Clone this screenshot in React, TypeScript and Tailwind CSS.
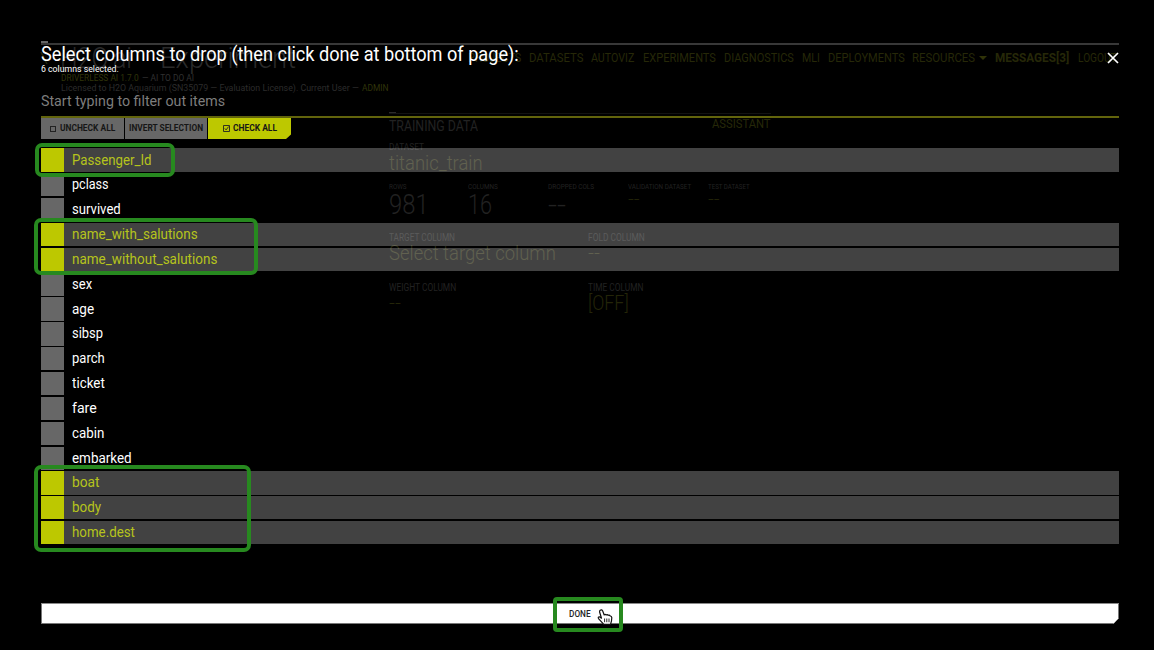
import { useLayoutEffect, useRef, useState } from "react";

/** Single line of text condensed or widened to the width `w`. */
function Fit({ w, className = "", children }: { w: number; className?: string; children: string }) {
  const ref = useRef<HTMLSpanElement>(null);
  const [scale, setScale] = useState(1);
  useLayoutEffect(() => {
    if (ref.current) setScale(w / ref.current.offsetWidth);
  }, [w, children]);
  return (
    <span className={`block shrink-0 whitespace-nowrap ${className}`} style={{ width: w }}>
      <span ref={ref} className="inline-block origin-left" style={{ transform: `scaleX(${scale})` }}>
        {children}
      </span>
    </span>
  );
}

const nav = [
  { label: "PROJECTS", w: 53 },
  { label: "DATASETS", w: 54 },
  { label: "AUTOVIZ", w: 43.5 },
  { label: "EXPERIMENTS", w: 73 },
  { label: "DIAGNOSTICS", w: 70 },
  { label: "MLI", w: 18 },
  { label: "DEPLOYMENTS", w: 76.5 },
];

const columns = [
  { name: "Passenger_Id", w: 79.5, on: true },
  { name: "pclass", w: 37, on: false },
  { name: "survived", w: 49, on: false },
  { name: "name_with_salutions", w: 125.5, on: true },
  { name: "name_without_salutions", w: 145.5, on: true },
  { name: "sex", w: 20, on: false },
  { name: "age", w: 22.5, on: false },
  { name: "sibsp", w: 31, on: false },
  { name: "parch", w: 33, on: false },
  { name: "ticket", w: 33, on: false },
  { name: "fare", w: 24.5, on: false },
  { name: "cabin", w: 32, on: false },
  { name: "embarked", w: 60, on: false },
  { name: "boat", w: 27.5, on: true },
  { name: "body", w: 29.5, on: true },
  { name: "home.dest", w: 63, on: true },
];

const stats = [
  { label: "ROWS", lw: 18, value: "981", vw: 40, box: "w-[79px]", big: true },
  { label: "COLUMNS", lw: 30, value: "16", vw: 24, box: "w-20", big: true },
  { label: "DROPPED COLS", lw: 46, value: "--", vw: 18, box: "w-[80px]", big: true },
  { label: "VALIDATION DATASET", lw: 63, value: "--", vw: 12, box: "w-[80px]", big: false },
  { label: "TEST DATASET", lw: 42, value: "--", vw: 12, box: "w-[80px]", big: false },
];

function ExperimentPage() {
  return (
    <div className="h-[650px] w-full pl-10 pt-[41px] text-[#222]">
      <div className="flex h-[71px] w-[1079px]">
        <div className="w-[428px] shrink-0">
          <div className="flex h-[32px] items-center gap-3 pt-[2px]">
            <svg className="h-4 w-2" viewBox="0 0 8 16" fill="none" stroke="#252508" strokeWidth="1.5">
              <path d="M1 2l6 12" />
            </svg>
            <Fit w={72} className="text-[29px] font-light leading-[30px] text-[#2a2a2a]">H2O.ai</Fit>
            <Fit w={136} className="ml-[16px] text-[29px] font-light leading-[30px] text-[#2a2a2a]">Experiment</Fit>
          </div>
          <div className="ml-[21px] flex h-[10px] gap-[3px] text-[9px] leading-[10px]">
            <Fit w={78} className="text-[#31350a]">DRIVERLESS AI 1.7.0</Fit>
            <Fit w={52} className="text-[#303030]">— AI TO DO AI</Fit>
          </div>
          <div className="ml-[21px] flex h-[10px] gap-[3px] text-[9px] leading-[10px]">
            <Fit w={298} className="text-[#2c2c2c]">
              Licensed to H2O Aquarium (SN35079 — Evaluation License). Current User —
            </Fit>
            <Fit w={27} className="text-[#31350a]">ADMIN</Fit>
          </div>
        </div>
        <nav className="flex h-5 items-center gap-2 pt-[13px] text-[13px] leading-5 text-[#262808]">
          {nav.map((n) => (
            <Fit key={n.label} w={n.w}>{n.label}</Fit>
          ))}
          <Fit w={63}>RESOURCES</Fit>
          <svg className="-ml-1 h-1 w-2 shrink-0" viewBox="0 0 8 4" fill="#303308">
            <path d="M0 0h8L4 4z" />
          </svg>
          <Fit w={74} className="font-bold">MESSAGES[3]</Fit>
          <Fit w={39} className="ml-px">LOGOUT</Fit>
        </nav>
      </div>
      <div className="flex">
        <div className="ml-[349px] w-[323px] shrink-0">
          <div className="h-px w-[7px] bg-[#2b2b2b]" />
          <div className="mb-[4px] h-px w-[382px] bg-[#121212]" />
          <Fit w={89} className="h-[24px] text-[14px] leading-[16px]">TRAINING DATA</Fit>
          <Fit w={35} className="h-[11px] text-[9px] leading-[11px]">DATASET</Fit>
          <Fit w={94} className="h-[28px] text-[20px] font-light leading-[20px] text-[#292a12]">titanic_train</Fit>
          <div className="flex h-[50px]">
            {stats.map((s) => (
              <div key={s.label} className={`shrink-0 ${s.box}`}>
                <Fit w={s.lw} className="text-[7px] leading-[12px]">{s.label}</Fit>
                {s.big ? (
                  <Fit w={s.vw} className="text-[28px] font-light leading-[23px]">{s.value}</Fit>
                ) : (
                  <Fit w={s.vw} className="text-[17px] font-light leading-[12px] text-[#252608]">{s.value}</Fit>
                )}
              </div>
            ))}
          </div>
          <div className="flex h-[50px]">
            <div className="w-[199px] shrink-0">
              <Fit w={66} className="text-[10px] leading-[13px]">TARGET COLUMN</Fit>
              <Fit w={167} className="text-[20px] font-light leading-[18px] text-[#292a12]">Select target column</Fit>
            </div>
            <div>
              <Fit w={57} className="text-[10px] leading-[13px]">FOLD COLUMN</Fit>
              <Fit w={12} className="text-[19px] font-light leading-[17px] text-[#292a12]">--</Fit>
            </div>
          </div>
          <div className="flex h-[50px]">
            <div className="w-[199px] shrink-0">
              <Fit w={67} className="text-[10px] leading-[13px]">WEIGHT COLUMN</Fit>
              <Fit w={12} className="text-[19px] font-light leading-[17px] text-[#242508]">--</Fit>
            </div>
            <div>
              <Fit w={55} className="text-[10px] leading-[13px]">TIME COLUMN</Fit>
              <Fit w={41} className="text-[20px] font-light leading-[18px] text-[#242508]">[OFF]</Fit>
            </div>
          </div>
        </div>
        <Fit w={59} className="pt-[5px] text-[12px] leading-[15px] text-[#262808]">ASSISTANT</Fit>
      </div>
    </div>
  );
}

function DropDialog() {
  return (
    <div className="absolute inset-0 pl-[41px] pr-[35px] pt-[41px]">
      <div className="h-[2px] w-[7px] bg-[#666]" />
      <div className="h-[2px] w-full bg-[#383838]" />
      <div className="flex h-[18px] justify-between text-white">
        <Fit w={478} className="text-[20px] leading-[18px]">Select columns to drop (then click done at bottom of page):</Fit>
        <svg className="mt-[7px] h-3 w-3" viewBox="0 0 12 12" stroke="white" strokeWidth="1.7">
          <path d="M1 1l10 10M11 1 1 11" />
        </svg>
      </div>
      <Fit w={78} className="h-[28px] text-[9.5px] leading-[11px] text-white">6 columns selected.</Fit>
      <Fit w={184} className="h-[25px] text-[15px] leading-[20px] text-[#7d7d7d]">Start typing to filter out items</Fit>
      <div className="h-[2px] w-full bg-[#62640c]" />
      <div className="flex h-[21px] gap-px text-[9px] font-bold leading-[21px] text-[#161616]">
        <div className="flex w-[83px] items-center gap-1 bg-[#676767] pl-[9px]">
          <span className="h-[6px] w-[6px] border border-[#222]" />
          <Fit w={55}>UNCHECK ALL</Fit>
        </div>
        <div className="flex w-[82px] items-center bg-[#676767] pl-[4px]">
          <Fit w={74}>INVERT SELECTION</Fit>
        </div>
        <div className="flex w-[83px] items-center gap-[3px] bg-[#bdc800] pl-[15px] [clip-path:polygon(0_0,100%_0,100%_78%,94%_100%,0_100%)]">
          <svg className="h-[7px] w-[7px]" viewBox="0 0 7 7" fill="none" stroke="#222" strokeWidth=".9">
            <path d="M.5.5h6v6h-6zM1.8 3.4l1.3 1.5L5.7 1.5" />
          </svg>
          <Fit w={44}>CHECK ALL</Fit>
        </div>
      </div>
      <div className="flex flex-col gap-[1.6px] pt-[9.4px]">
        {columns.map((c) => (
          <div key={c.name} className={`flex h-[23.25px] items-center gap-2 ${c.on ? "bg-white/26" : ""}`}>
            <div className={`h-full w-[23px] ${c.on ? "bg-[#bdc800]" : "bg-[#676767]"}`} />
            <Fit w={c.w} className={`text-[15px] leading-[21px] ${c.on ? "text-[#b6c41c]" : "text-white"}`}>{c.name}</Fit>
          </div>
        ))}
      </div>
      <button className="mt-[59px] flex h-[21px] w-full items-center border border-[#777] bg-white pl-[527px] text-[9px] leading-[20px] text-[#222] [clip-path:polygon(0_0,100%_0,100%_70%,99.45%_100%,0_100%)]">
        <Fit w={22} className="font-medium">DONE</Fit>
      </button>
    </div>
  );
}

export default function App() {
  return (
    <main className="relative h-[650px] w-full overflow-hidden bg-black font-['Roboto','Liberation_Sans',sans-serif]">
      <ExperimentPage />
      <DropDialog />
      <div className="absolute left-[35px] top-[143px] h-[34px] w-[140px] rounded-[7px] border-4 border-[#27891f]" />
      <div className="absolute left-[34px] top-[218px] h-[57px] w-[224px] rounded-[7px] border-4 border-[#27891f]" />
      <div className="absolute left-[34px] top-[465px] h-[87px] w-[217px] rounded-[7px] border-4 border-[#27891f]" />
      <div className="absolute left-[553px] top-[597px] h-[35px] w-[70px] rounded-[4px] border-4 border-[#27891f]" />
      <svg className="absolute left-[597px] top-[609px] h-[16px] w-[16px]" viewBox="0 0 16 16" fill="white" stroke="#111" strokeWidth="1.2" strokeLinejoin="round">
        <path d="M3.2 1.2Q4.8.2 5.7 2L7.2 6Q8 4.8 9.2 6q1.2-.8 2 .3 1.4-.5 2 .7 1.3.1 1.6 1.6l-.3 3.2-1 3.5H6.8L1.5 9.6Q.7 8 2.4 7.8L4.5 9.2 2.6 3q-.2-1.2.6-1.8z" />
        <path d="M7.6 9.5v3.7M9.8 9.5v3.7M12 9.5v3.7" strokeWidth=".9" />
      </svg>
    </main>
  );
}
